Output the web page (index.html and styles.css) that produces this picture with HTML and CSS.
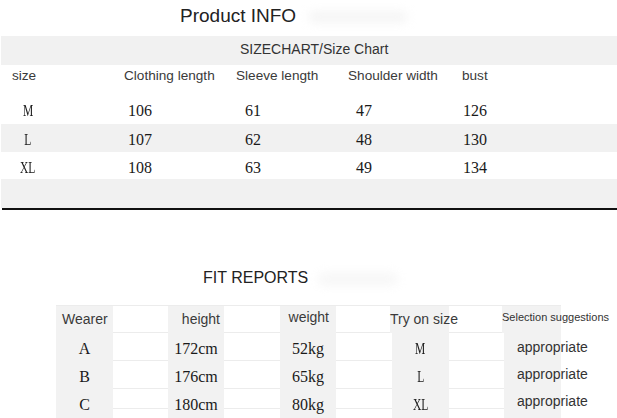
FILE: index.html
```html
<!DOCTYPE html>
<html>
<head>
<meta charset="utf-8">
<link rel="stylesheet" href="styles.css">
</head>
<body>
<div class="page">
  <h1 class="title">Product INFO<span class="smudge smudge-title"></span></h1>
  <div class="band">SIZECHART/Size Chart</div>

  <div class="sc-row sc-head">
    <span class="c1 lab">size</span>
    <span class="c2 lab">Clothing length</span>
    <span class="c3 lab">Sleeve length</span>
    <span class="c4 lab">Shoulder width</span>
    <span class="c5 lab">bust</span>
  </div>
  <div class="sc-row sc-m">
    <span class="c1 val sz"><span class="narrow">M</span></span>
    <span class="c2 val">106</span>
    <span class="c3 val">61</span>
    <span class="c4 val">47</span>
    <span class="c5 val">126</span>
  </div>
  <div class="sc-row sc-l gray">
    <span class="c1 val sz"><span class="narrow">L</span></span>
    <span class="c2 val">107</span>
    <span class="c3 val">62</span>
    <span class="c4 val">48</span>
    <span class="c5 val">130</span>
  </div>
  <div class="sc-row sc-xl">
    <span class="c1 val sz"><span class="narrow">XL</span></span>
    <span class="c2 val">108</span>
    <span class="c3 val">63</span>
    <span class="c4 val">49</span>
    <span class="c5 val">134</span>
  </div>
  <div class="sc-empty gray"></div>
  <div class="rule"></div>

  <h2 class="fit-title">FIT REPORTS<span class="smudge smudge-fit"></span></h2>

  <div class="fit">
    <div class="fit-row fit-head">
      <div class="g h-wearer">Wearer</div><div class="w"></div>
      <div class="g h-height">height</div><div class="w"></div>
      <div class="g h-weight">weight</div><div class="w"></div>
      <div class="g h-try">Try on size</div><div class="w"></div>
      <div class="g h-sel">Selection suggestions</div>
    </div>
    <div class="fit-row r-a">
      <div class="g v">A</div><div class="w"></div>
      <div class="g v">172cm</div><div class="w"></div>
      <div class="g v">52kg</div><div class="w"></div>
      <div class="g v"><span class="narrow">M</span></div><div class="w"></div>
      <div class="g ap">appropriate</div>
    </div>
    <div class="fit-row r-b">
      <div class="g v">B</div><div class="w"></div>
      <div class="g v">176cm</div><div class="w"></div>
      <div class="g v">65kg</div><div class="w"></div>
      <div class="g v"><span class="narrow">L</span></div><div class="w"></div>
      <div class="g ap">appropriate</div>
    </div>
    <div class="fit-row r-c">
      <div class="g v">C</div><div class="w"></div>
      <div class="g v">180cm</div><div class="w"></div>
      <div class="g v">80kg</div><div class="w"></div>
      <div class="g v"><span class="narrow">XL</span></div><div class="w"></div>
      <div class="g ap">appropriate</div>
    </div>
  </div>
</div>
</body>
</html>
```

FILE: styles.css
```css
html, body {
  margin: 0;
  padding: 0;
  background: #ffffff;
}
.page {
  width: 617px;
  height: 418px;
  overflow: hidden;
  font-family: "Liberation Sans", Arial, sans-serif;
  color: #333;
}
.title {
  margin: 0;
  height: 36px;
  line-height: 32px;
  padding-left: 180px;
  font-size: 19px;
  font-weight: normal;
  color: #222;
  white-space: nowrap;
  box-sizing: border-box;
}
.smudge {
  display: inline-block;
  vertical-align: middle;
  background: #ececec;
  filter: blur(5px);
  border-radius: 6px;
}
.smudge-title {
  width: 100px;
  height: 12px;
  margin-left: 12px;
  opacity: 0.5;
}
.smudge-fit {
  width: 80px;
  height: 14px;
  margin-left: 10px;
  opacity: 0.4;
}
.band {
  margin-left: 1px;
  height: 29px;
  line-height: 26px;
  background: #f1f1f1;
  padding-left: 239px;
  font-size: 14px;
  color: #333;
  box-sizing: border-box;
}
.gray {
  background: #f1f1f1;
}
.sc-row {
  margin-left: 1px;
  display: grid;
  grid-template-columns: 123px 112px 112px 113px 1fr;
  white-space: nowrap;
}
.lab {
  font-size: 13.6px;
  color: #3a3a3a;
}
.val {
  font-family: "Liberation Serif", "Times New Roman", serif;
  font-size: 16px;
  color: #1a1a1a;
}
.narrow {
  display: inline-block;
  transform: scaleX(0.72);
}
.sc-head {
  height: 24px;
  line-height: 22px;
}
.sc-head .c1 { padding-left: 11px; }
.sc-head .c2 { padding-left: 0; }
.sc-head .c3 { padding-left: 0; }
.sc-head .c4 { padding-left: 0; }
.sc-head .c5 { padding-left: 1px; }

.sc-m {
  height: 35px;
  padding-top: 8px;
  line-height: 27px;
  box-sizing: border-box;
}
.sc-l {
  height: 28px;
  line-height: 32px;
}
.sc-xl {
  height: 27px;
  line-height: 31px;
}
.sz {
  width: 54px;
  text-align: center;
}
.c2.val { padding-left: 4px; }
.c3.val { padding-left: 9px; }
.c4.val { padding-left: 8px; }
.c5.val { padding-left: 2px; }

.sc-empty {
  margin-left: 1px;
  height: 29px;
}
.rule {
  margin-left: 2px;
  height: 2px;
  background: #111;
}
.fit-title {
  margin: 0 0 17px 0;
  padding-top: 58px;
  padding-left: 203px;
  height: 78px;
  line-height: 20px;
  font-size: 16px;
  font-weight: normal;
  color: #222;
  box-sizing: border-box;
  white-space: nowrap;
}
.fit {
  margin-left: 56px;
  width: 505px;
  border-bottom: 1px solid #ececec;
}
.fit-row {
  display: grid;
  grid-template-columns: 57px 55px 56px 56px 56px 56px 57px 55px 57px;
  border-top: 1px solid #ececec;
  white-space: nowrap;
}
.g {
  background: #f2f2f2;
}
.w {
  background: transparent;
}
.fit-head {
  height: 26px;
  line-height: 27px;
  font-size: 14px;
  color: #3a3a3a;
}
.h-wearer { padding-left: 6px; }
.h-height { text-align: right; padding-right: 4px; }
.h-weight { text-align: right; padding-right: 7px; line-height: 23px; }
.h-try { margin-left: -2px; padding-left: 0; position: relative; z-index: 1; }
.h-sel { font-size: 11px; line-height: 22px; padding-left: 0; margin-left: -2px; color: #333; }

.r-a, .r-b {
  height: 27px;
}
.r-c {
  height: 19px;
}
.v {
  font-family: "Liberation Serif", "Times New Roman", serif;
  font-size: 16px;
  color: #1a1a1a;
  text-align: center;
  line-height: 32px;
}
.ap {
  font-size: 14px;
  color: #333;
  padding-left: 13px;
  line-height: 28px;
}
.r-b .ap { line-height: 27px; }
.r-c .ap { line-height: 25px; }
```
